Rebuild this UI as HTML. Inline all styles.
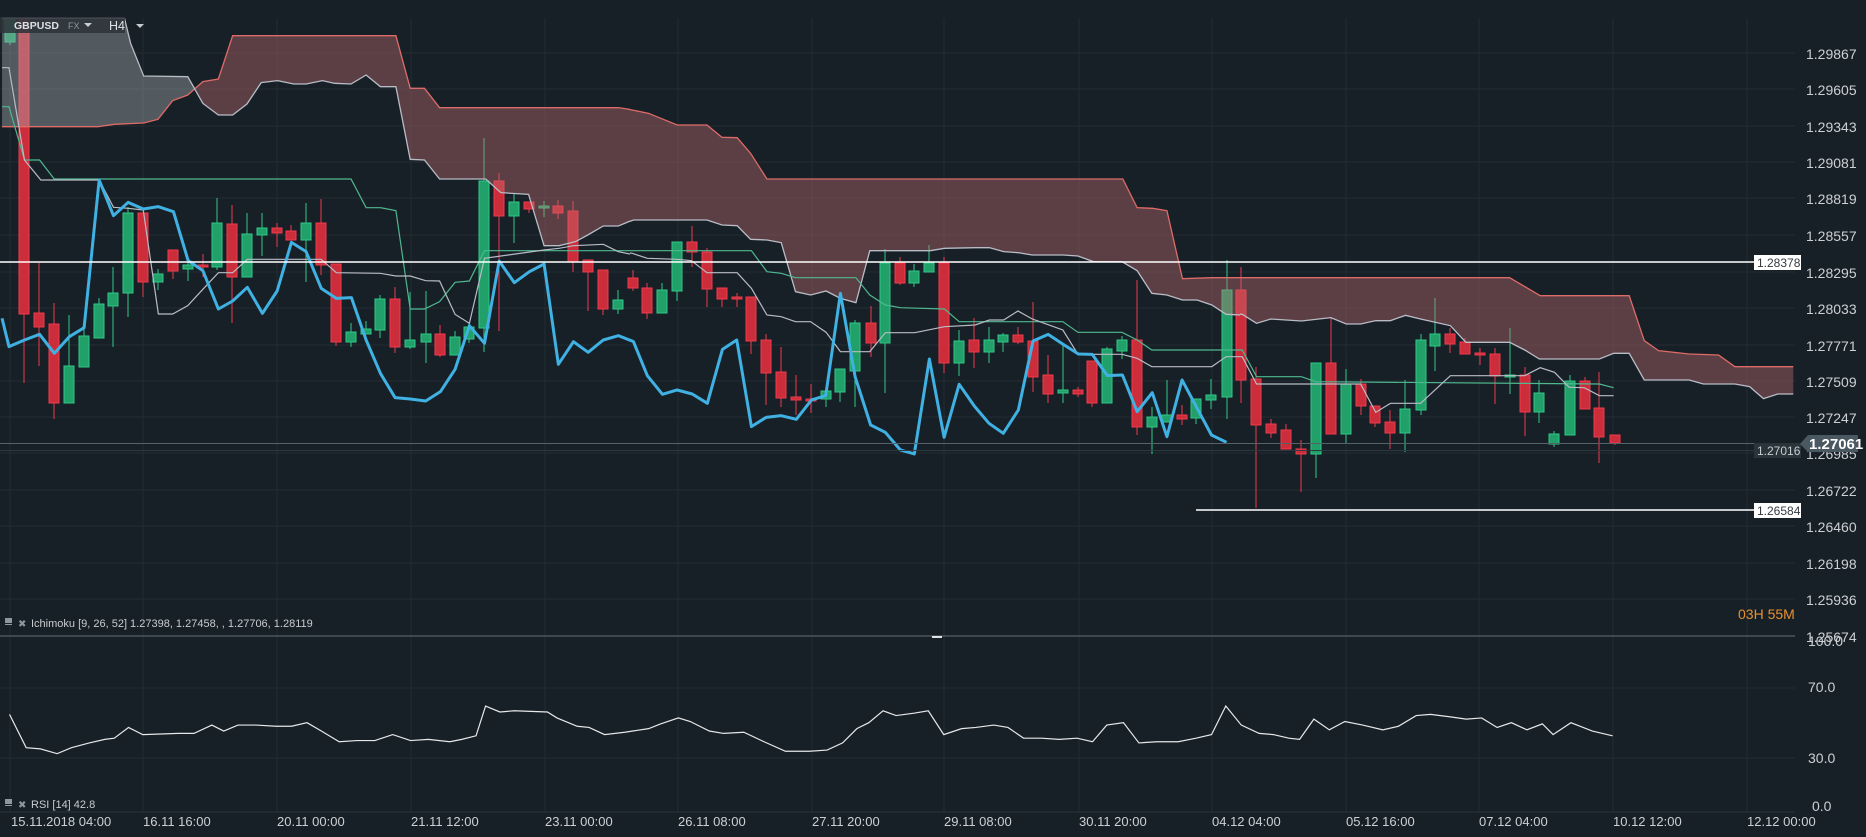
<!DOCTYPE html>
<html><head><meta charset="utf-8"><style>
html,body{margin:0;padding:0;background:#182027;overflow:hidden}
svg{display:block}
text{font-family:"Liberation Sans",sans-serif}
.ax{fill:#ccd0d4;font-size:14px}
.dt{fill:#ccd0d4;font-size:13px}
.gl{stroke:#222c33;stroke-width:1}
.r rect{fill:#cc2d3b;stroke:#ef3a4c;stroke-width:1}
.r path{stroke:#ef3a4c;stroke-width:1}
.g rect{fill:#21a06a;stroke:#2fc987;stroke-width:1}
.g path{stroke:#2fc987;stroke-width:1}
.ln{fill:none;vector-effect:non-scaling-stroke}
</style></head><body>
<svg width="1866" height="837" viewBox="0 0 1866 837" xmlns="http://www.w3.org/2000/svg">
<defs>
<clipPath id="c6"><rect x="0" y="0" width="630" height="640"/></clipPath>
<clipPath id="c7"><rect x="630" y="0" width="610" height="640"/></clipPath>
<clipPath id="c8"><rect x="1240" y="0" width="600" height="640"/></clipPath>
</defs>
<g class="gl">
<path d="M0 53H1795M0 89H1795M0 126H1795M0 162H1795M0 198H1795M0 235H1795M0 272H1795M0 308H1795M0 345H1795M0 381H1795M0 417H1795M0 453H1795M0 490H1795M0 526H1795M0 563H1795M0 599H1795M0 688H1795M0 758H1795"/>
<path d="M10 18V812M143 18V812M277 18V812M411 18V812M545 18V812M678 18V812M812 18V812M944 18V812M1079 18V812M1212 18V812M1346 18V812M1479 18V812M1613 18V812M1747 18V812"/>
</g>
<path d="M0 636H1795" stroke="#4c565e" stroke-width="1.5"/>
<path d="M0 812H1795" stroke="#2a343b" stroke-width="1"/>
<path d="M932 637H942" stroke="#dfe3e6" stroke-width="2"/>

<g class="g">
<path d="M10 18V45"/><rect x="5" y="18" width="10" height="24"/>
<path d="M69 315V403"/><rect x="64" y="366" width="10" height="37"/>
<path d="M84 327V367"/><rect x="79" y="336" width="10" height="31"/>
<path d="M99 298V338"/><rect x="94" y="304" width="10" height="34"/>
<path d="M113 267V347"/><rect x="108" y="293" width="10" height="13"/>
<path d="M128 207V317"/><rect x="123" y="213" width="10" height="80"/>
<path d="M158 269V290"/><rect x="153" y="274" width="10" height="8"/>
<path d="M188 260V281"/><rect x="183" y="265" width="10" height="4"/>
<path d="M217 198V270"/><rect x="212" y="223" width="10" height="44"/>
<path d="M247 213V277"/><rect x="242" y="234" width="10" height="43"/>
<path d="M262 213V256"/><rect x="257" y="228" width="10" height="7"/>
<path d="M306 203V282"/><rect x="301" y="223" width="10" height="17"/>
<path d="M351 323V347"/><rect x="346" y="332" width="10" height="10"/>
<path d="M366 321V334"/><rect x="361" y="329" width="10" height="5"/>
<path d="M380 295V338"/><rect x="375" y="299" width="10" height="31"/>
<path d="M410 292V349"/><rect x="405" y="340" width="10" height="7"/>
<path d="M426 291V363"/><rect x="421" y="334" width="10" height="8"/>
<path d="M455 331V355"/><rect x="450" y="337" width="10" height="18"/>
<path d="M469 322V343"/><rect x="464" y="327" width="10" height="12"/>
<path d="M484 138V352"/><rect x="479" y="181" width="10" height="147"/>
<path d="M514 193V243"/><rect x="509" y="202" width="10" height="14"/>
<path d="M544 201V217"/><rect x="539" y="206" width="10" height="2"/>
<path d="M618 290V314"/><rect x="613" y="300" width="10" height="9"/>
<path d="M662 283V313"/><rect x="657" y="290" width="10" height="23"/>
<path d="M677 242V301"/><rect x="672" y="242" width="10" height="49"/>
<path d="M826 391V407"/><rect x="821" y="391" width="10" height="8"/>
<path d="M840 369V402"/><rect x="835" y="369" width="10" height="23"/>
<path d="M855 320V407"/><rect x="850" y="323" width="10" height="48"/>
<path d="M885 249V393"/><rect x="880" y="263" width="10" height="80"/>
<path d="M914 264V287"/><rect x="909" y="271" width="10" height="12"/>
<path d="M929 245V272"/><rect x="924" y="263" width="10" height="9"/>
<path d="M959 330V376"/><rect x="954" y="341" width="10" height="22"/>
<path d="M989 327V363"/><rect x="984" y="340" width="10" height="12"/>
<path d="M1003 333V352"/><rect x="998" y="335" width="10" height="7"/>
<path d="M1063 345V403"/><rect x="1058" y="390" width="10" height="3"/>
<path d="M1107 347V403"/><rect x="1102" y="349" width="10" height="54"/>
<path d="M1122 336V359"/><rect x="1117" y="340" width="10" height="11"/>
<path d="M1152 407V454"/><rect x="1147" y="417" width="10" height="10"/>
<path d="M1167 380V422"/><rect x="1162" y="415" width="10" height="7"/>
<path d="M1196 399V424"/><rect x="1191" y="399" width="10" height="19"/>
<path d="M1211 379V409"/><rect x="1206" y="395" width="10" height="5"/>
<path d="M1227 260V419"/><rect x="1222" y="290" width="10" height="107"/>
<path d="M1316 363V478"/><rect x="1311" y="363" width="10" height="91"/>
<path d="M1346 369V443"/><rect x="1341" y="384" width="10" height="50"/>
<path d="M1405 380V452"/><rect x="1400" y="409" width="10" height="24"/>
<path d="M1421 334V415"/><rect x="1416" y="340" width="10" height="70"/>
<path d="M1435 298V371"/><rect x="1430" y="334" width="10" height="12"/>
<path d="M1510 328V394"/><rect x="1505" y="375" width="10" height="2"/>
<path d="M1539 380V423"/><rect x="1534" y="393" width="10" height="19"/>
<path d="M1554 431V447"/><rect x="1549" y="434" width="10" height="10"/>
<path d="M1570 375V435"/><rect x="1565" y="381" width="10" height="54"/>
</g>
<g class="r">
<path d="M24 18V383"/><rect x="19" y="18" width="10" height="296"/>
<path d="M39 263V366"/><rect x="34" y="313" width="10" height="14"/>
<path d="M54 303V419"/><rect x="49" y="324" width="10" height="79"/>
<path d="M143 213V297"/><rect x="138" y="213" width="10" height="69"/>
<path d="M173 250V279"/><rect x="168" y="250" width="10" height="21"/>
<path d="M203 254V277"/><rect x="198" y="265" width="10" height="2"/>
<path d="M232 205V323"/><rect x="227" y="224" width="10" height="53"/>
<path d="M277 223V247"/><rect x="272" y="228" width="10" height="5"/>
<path d="M291 225V240"/><rect x="286" y="231" width="10" height="9"/>
<path d="M321 199V275"/><rect x="316" y="223" width="10" height="42"/>
<path d="M336 264V346"/><rect x="331" y="264" width="10" height="78"/>
<path d="M395 287V353"/><rect x="390" y="299" width="10" height="48"/>
<path d="M440 325V357"/><rect x="435" y="334" width="10" height="21"/>
<path d="M499 173V331"/><rect x="494" y="181" width="10" height="35"/>
<path d="M529 202V213"/><rect x="524" y="202" width="10" height="7"/>
<path d="M558 200V219"/><rect x="553" y="206" width="10" height="7"/>
<path d="M573 201V272"/><rect x="568" y="211" width="10" height="51"/>
<path d="M588 260V311"/><rect x="583" y="260" width="10" height="12"/>
<path d="M603 270V315"/><rect x="598" y="270" width="10" height="39"/>
<path d="M633 270V291"/><rect x="628" y="278" width="10" height="10"/>
<path d="M647 283V319"/><rect x="642" y="288" width="10" height="25"/>
<path d="M692 226V267"/><rect x="687" y="242" width="10" height="10"/>
<path d="M707 248V307"/><rect x="702" y="252" width="10" height="37"/>
<path d="M722 288V307"/><rect x="717" y="288" width="10" height="11"/>
<path d="M737 293V307"/><rect x="732" y="297" width="10" height="2"/>
<path d="M751 297V354"/><rect x="746" y="297" width="10" height="44"/>
<path d="M766 334V405"/><rect x="761" y="340" width="10" height="33"/>
<path d="M781 347V407"/><rect x="776" y="372" width="10" height="26"/>
<path d="M796 375V415"/><rect x="791" y="397" width="10" height="3"/>
<path d="M811 384V413"/><rect x="806" y="399" width="10" height="2"/>
<path d="M871 306V357"/><rect x="866" y="323" width="10" height="20"/>
<path d="M900 257V285"/><rect x="895" y="263" width="10" height="20"/>
<path d="M944 257V373"/><rect x="939" y="263" width="10" height="100"/>
<path d="M974 318V368"/><rect x="969" y="340" width="10" height="12"/>
<path d="M1018 327V344"/><rect x="1013" y="335" width="10" height="7"/>
<path d="M1033 302V392"/><rect x="1028" y="341" width="10" height="36"/>
<path d="M1048 355V403"/><rect x="1043" y="375" width="10" height="19"/>
<path d="M1078 387V397"/><rect x="1073" y="390" width="10" height="4"/>
<path d="M1092 361V407"/><rect x="1087" y="361" width="10" height="42"/>
<path d="M1137 280V435"/><rect x="1132" y="340" width="10" height="87"/>
<path d="M1182 405V425"/><rect x="1177" y="415" width="10" height="4"/>
<path d="M1241 267V403"/><rect x="1236" y="290" width="10" height="90"/>
<path d="M1256 367V508"/><rect x="1251" y="379" width="10" height="46"/>
<path d="M1271 419V438"/><rect x="1266" y="424" width="10" height="9"/>
<path d="M1286 424V449"/><rect x="1281" y="430" width="10" height="19"/>
<path d="M1301 440V492"/><rect x="1296" y="449" width="10" height="5"/>
<path d="M1331 318V434"/><rect x="1326" y="363" width="10" height="71"/>
<path d="M1361 379V415"/><rect x="1356" y="384" width="10" height="22"/>
<path d="M1375 406V427"/><rect x="1370" y="406" width="10" height="17"/>
<path d="M1390 410V449"/><rect x="1385" y="422" width="10" height="11"/>
<path d="M1450 328V353"/><rect x="1445" y="334" width="10" height="10"/>
<path d="M1465 338V354"/><rect x="1460" y="342" width="10" height="12"/>
<path d="M1480 348V365"/><rect x="1475" y="353" width="10" height="2"/>
<path d="M1495 348V404"/><rect x="1490" y="354" width="10" height="22"/>
<path d="M1525 367V436"/><rect x="1520" y="375" width="10" height="37"/>
<path d="M1585 377V409"/><rect x="1580" y="381" width="10" height="28"/>
<path d="M1599 372V463"/><rect x="1594" y="408" width="10" height="29"/>
<path d="M1615 435V445"/><rect x="1610" y="435" width="10" height="8"/>
</g>

<g clip-path="url(#c6)"><g transform="scale(0.40816,0.33333)">
<polygon fill="#a9b1b5" fill-opacity="0.4" points="5,55 305,55 320,130 352,228 460,230 478,264 460,285 423,302 387,358 352,369 280,373 240,380 5,380"/>
<polygon fill="#c06d70" fill-opacity="0.4" points="478,264 497,245 535,237 570,107 970,107 1005,265 1040,265 1077,323 1515,323 1568,333 1568,660 1550,660 1515,678 1478,678 1440,705 1410,725 1370,737 1333,737 1295,583 1227,578 1190,537 1077,537 1040,480 1005,478 970,260 932,260 897,225 860,252 820,250 790,242 750,252 720,252 680,242 640,248 605,312 570,345 535,345 497,310"/>
<polyline class="ln" stroke="#de6b67" stroke-width="1.3" points="5,380 240,380 280,373 352,369 387,358 423,302 460,285 497,245 535,237 570,107 970,107 1005,265 1040,265 1077,323 1515,323 1568,333"/>
<polyline class="ln" stroke="#b9bcc6" stroke-width="1.3" points="5,55 305,55 320,130 352,228 460,230 497,310 535,345 570,345 605,312 640,248 680,242 720,252 750,252 790,242 820,250 860,252 897,225 932,260 970,260 1005,478 1040,480 1077,537 1190,537 1227,578 1295,583 1333,737 1370,737 1410,725 1440,705 1478,678 1515,678 1550,660 1568,660"/>
<polyline class="ln" stroke="#4fb88f" stroke-width="1.2" points="5,320 22,320 60,480 97,480 133,537 860,537 897,623 932,623 970,632 1005,927 1040,927 1077,905 1115,847 1150,843 1187,752 1568,752"/>
<polyline class="ln" stroke="#b9bcc6" stroke-width="1.2" points="5,203 22,203 60,480 100,540 243,540 278,622 314,625 351,630 388,942 423,942 460,917 497,868 535,818 570,818 606,778 787,778 824,818 932,820 970,828 1005,828 1043,842 1077,843 1115,943 1150,970 1187,775 1333,750 1370,745 1405,737 1478,733 1515,755 1568,768"/>
<polyline class="ln" stroke="#3fb1e3" stroke-width="3" stroke-linejoin="round" points="5,955 22,1040 60,1020 97,1003 133,1060 170,1010 206,983 243,540 278,647 314,607 351,627 388,620 425,635 461,782 497,812 535,927 570,903 606,862 643,940 679,873 714,727 750,755 787,865 824,895 861,893 897,1020 932,1120 968,1193 1005,1197 1043,1203 1079,1175 1115,1108 1150,977 1187,1030 1223,783 1260,848 1297,815 1333,792 1368,1093 1405,1025 1441,1057 1478,1020 1515,1007 1552,1025 1568,1075"/>
</g></g>

<g clip-path="url(#c7)"><g transform="translate(620,0) scale(0.40816,0.33333)">
<polygon fill="#c06d70" fill-opacity="0.4" points="0,325 30,330 70,340 140,375 213,375 250,412 287,413 320,460 360,537 1232,537 1267,623 1305,625 1340,632 1378,836 1450,833 1568,833 1568,975 1560,970 1522,945 1485,943 1450,915 1414,900 1378,900 1340,885 1303,880 1267,812 1230,785 1160,785 1122,768 1085,765 1010,765 975,758 940,755 905,743 870,743 795,745 760,752 612,752 578,908 540,895 505,873 467,885 430,875 395,728 360,720 320,718 287,677 250,675 213,660 33,660 0,675"/>
<polyline class="ln" stroke="#de6b67" stroke-width="1.3" points="0,325 30,330 70,340 140,375 213,375 250,412 287,413 320,460 360,537 1232,537 1267,623 1305,625 1340,632 1378,836 1450,833 1568,833"/>
<polyline class="ln" stroke="#b9bcc6" stroke-width="1.3" points="0,675 33,660 213,660 250,675 287,677 320,718 360,720 395,728 430,875 467,885 505,873 540,895 578,908 612,752 760,752 795,745 870,743 905,743 940,755 975,758 1010,765 1085,765 1122,768 1160,785 1230,785 1267,812 1303,880 1340,885 1378,900 1414,900 1450,915 1485,943 1522,945 1560,970 1568,975"/>
<polyline class="ln" stroke="#4fb88f" stroke-width="1.2" points="0,752 322,752 360,815 395,820 430,833 578,833 612,885 650,915 687,923 795,927 831,965 1085,965 1122,997 1230,997 1267,1020 1303,1050 1522,1050 1560,1130 1568,1130"/>
<polyline class="ln" stroke="#b9bcc6" stroke-width="1.2" points="0,755 30,760 67,775 140,778 175,782 213,818 287,818 322,865 360,945 395,950 430,965 467,965 505,997 540,1055 612,1055 650,998 722,998 795,980 870,975 905,960 940,960 975,933 1010,957 1085,990 1122,1063 1230,1063 1267,1075 1303,1100 1450,1100 1485,1070 1522,1070 1560,1150 1568,1152"/>
<polyline class="ln" stroke="#3fb1e3" stroke-width="3" stroke-linejoin="round" points="0,1007 33,1025 67,1127 104,1183 140,1170 177,1182 214,1210 251,1048 286,1020 322,1280 358,1252 395,1247 432,1258 469,1200 504,1187 540,880 576,1130 614,1275 650,1297 687,1350 721,1362 758,1077 794,1312 831,1153 868,1218 904,1270 939,1300 976,1230 1012,1023 1049,1003 1086,1033 1123,1062 1157,1063 1194,1127 1231,1125 1267,1235 1304,1178 1340,1310 1377,1140 1412,1220 1449,1305 1486,1327"/>
</g></g>

<g clip-path="url(#c8)"><g transform="translate(1230,0) scale(0.40816,0.33333)">
<polygon fill="#c06d70" fill-opacity="0.4" points="0,833 685,833 760,887 978,887 1015,1022 1050,1052 1125,1062 1197,1065 1237,1100 1380,1100 1380,1182 1342,1182 1307,1196 1273,1160 1237,1152 1160,1152 1125,1140 1015,1140 978,1060 940,1060 905,1077 758,1077 722,1050 685,1027 578,1027 540,977 467,957 430,946 393,962 357,962 320,972 285,972 247,953 175,963 100,957 65,970 30,943 0,943"/>
<polyline class="ln" stroke="#de6b67" stroke-width="1.3" points="0,833 685,833 760,887 978,887 1015,1022 1050,1052 1125,1062 1197,1065 1237,1100 1380,1100"/>
<polyline class="ln" stroke="#b9bcc6" stroke-width="1.3" points="0,943 30,943 65,970 100,957 175,963 247,953 285,972 320,972 357,962 393,962 430,946 467,957 540,977 578,1027 685,1027 722,1050 758,1077 905,1077 940,1060 978,1060 1015,1140 1125,1140 1160,1152 1237,1152 1273,1160 1307,1196 1342,1182 1380,1182"/>
<polyline class="ln" stroke="#4fb88f" stroke-width="1.2" points="0,1050 30,1050 65,1130 175,1130 210,1145 905,1152 940,1163"/>
<polyline class="ln" stroke="#b9bcc6" stroke-width="1.2" points="0,1070 30,1070 65,1152 320,1152 357,1237 393,1210 467,1210 540,1127 722,1127 760,1103 795,1117 831,1162 868,1163 905,1187 940,1187"/>
</g></g>

<path d="M0 262H1754" stroke="#ffffff" stroke-width="1.5"/>
<path d="M1196 510H1754" stroke="#ffffff" stroke-width="1.5"/>
<path d="M0 443.5H1800" stroke="#56616a" stroke-width="1"/>
<path d="M0 450.5H1754" stroke="#2e3840" stroke-width="1"/>

<g transform="scale(1.1901,1.1906)">
<polyline class="ln" fill="none" stroke="#e6e8ea" stroke-width="1.2" points="8,600 22,628 34,629 48,633 60,628 75,624 88,621 96,620 108,611 120,617 150,616 163,616 178,609 188,614 200,609 215,609 232,610 245,610 258,607 270,614 285,623 300,622 315,622 330,617 345,622 360,621 378,623 388,621 400,618 408,593 420,598 432,597 460,598 468,603 485,610 495,611 508,617 525,615 545,612 555,608 570,603 580,606 596,614 608,616 625,615 642,623 660,631 680,631 695,630 708,624 720,612 730,607 742,597 753,601 768,599 780,597 793,617 808,612 820,611 835,609 847,611 860,620 875,620 890,621 905,620 918,623 930,609 944,607 957,624 972,623 990,623 1005,620 1018,617 1030,593 1043,609 1058,616 1070,617 1083,620 1092,621 1104,604 1117,613 1130,606 1145,609 1162,613 1175,610 1190,601 1202,600 1218,602 1232,604 1245,603 1258,611 1270,607 1283,613 1296,608 1305,617 1320,607 1338,614 1355,618"/>
</g>

<rect x="0" y="17" width="125" height="16" fill="#2b3338" fill-opacity="0.85"/>
<text x="14" y="29" font-size="10.5" font-weight="bold" fill="#dde0e3">GBPUSD</text>
<text x="68" y="29" font-size="9" fill="#8e979e">FX</text>
<path d="M84 23h8l-4 4z" fill="#c7ccd0"/>
<text x="109" y="30" font-size="12.5" fill="#dde0e3">H4</text>
<path d="M136 24h8l-4 4z" fill="#c7ccd0"/>

<g class="ax">
<text x="1806" y="59">1.29867</text>
<text x="1806" y="95">1.29605</text>
<text x="1806" y="132">1.29343</text>
<text x="1806" y="168">1.29081</text>
<text x="1806" y="204">1.28819</text>
<text x="1806" y="241">1.28557</text>
<text x="1806" y="278">1.28295</text>
<text x="1806" y="314">1.28033</text>
<text x="1806" y="351">1.27771</text>
<text x="1806" y="387">1.27509</text>
<text x="1806" y="423">1.27247</text>
<text x="1806" y="459">1.26985</text>
<text x="1806" y="496">1.26722</text>
<text x="1806" y="532">1.26460</text>
<text x="1806" y="569">1.26198</text>
<text x="1806" y="605">1.25936</text>
<text x="1806" y="642">1.25674</text>
<text x="1808" y="646">100.0</text>
<text x="1808" y="692">70.0</text>
<text x="1808" y="763">30.0</text>
<text x="1812" y="811">0.0</text>
</g>

<rect x="1754" y="255" width="47" height="15" fill="#ffffff"/>
<text x="1757" y="267" font-size="12" fill="#333a40">1.28378</text>
<rect x="1754" y="503" width="47" height="15" fill="#ffffff"/>
<text x="1757" y="515" font-size="12" fill="#333a40">1.26584</text>
<rect x="1754" y="443" width="47" height="15" fill="#2a343b"/>
<text x="1757" y="455" font-size="12" fill="#c8ccd0">1.27016</text>
<path d="M1800 444L1808 435H1858V452H1808Z" fill="#4a5861"/>
<text x="1809" y="449" font-size="15" font-weight="bold" fill="#ffffff">1.27061</text>

<text x="1738" y="619" font-size="14" fill="#e8912d">03H 55M</text>

<g fill="#8e979e"><rect x="5" y="618" width="7" height="5"/><rect x="5" y="624" width="7" height="1"/></g>
<text x="18" y="627" font-size="10" fill="#8e979e">✖</text>
<text x="31" y="627" font-size="11" fill="#c8ccd0">Ichimoku  [9, 26, 52]  1.27398,  1.27458,  , 1.27706,  1.28119</text>
<g fill="#8e979e"><rect x="5" y="799" width="7" height="5"/><rect x="5" y="805" width="7" height="1"/></g>
<text x="18" y="808" font-size="10" fill="#8e979e">✖</text>
<text x="31" y="808" font-size="11" fill="#c8ccd0">RSI [14]  42.8</text>

<g class="dt">
<text x="11" y="826">15.11.2018  04:00</text>
<text x="143" y="826">16.11  16:00</text>
<text x="277" y="826">20.11  00:00</text>
<text x="411" y="826">21.11  12:00</text>
<text x="545" y="826">23.11  00:00</text>
<text x="678" y="826">26.11  08:00</text>
<text x="812" y="826">27.11  20:00</text>
<text x="944" y="826">29.11  08:00</text>
<text x="1079" y="826">30.11  20:00</text>
<text x="1212" y="826">04.12  04:00</text>
<text x="1346" y="826">05.12  16:00</text>
<text x="1479" y="826">07.12  04:00</text>
<text x="1613" y="826">10.12  12:00</text>
<text x="1747" y="826">12.12  00:00</text>
</g>
</svg>
</body></html>
